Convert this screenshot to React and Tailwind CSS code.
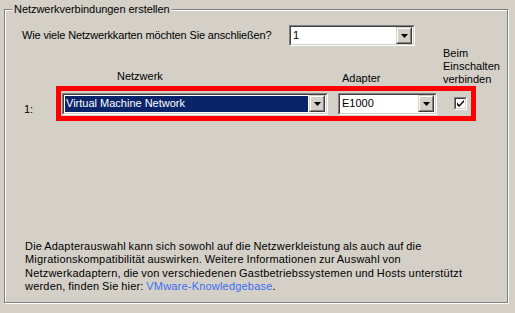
import React from 'react';

// --- Classic sunken dropdown (Win2000 look) ---
const DropButton = () => (
  <div className="w-[16px] h-[17px] border border-t-[#d4d0c8] border-l-[#d4d0c8] border-r-[#404040] border-b-[#404040] shrink-0">
    <div className="w-full h-full border border-t-white border-l-white border-r-[#808080] border-b-[#808080] bg-[#d4d0c8] flex items-center justify-center">
      <svg width="7" height="4" viewBox="0 0 7 4"><path d="M0 0h7L3.5 4z" fill="#000" /></svg>
    </div>
  </div>
);

const Combo = ({ value, width, height = 21, selected = false }) => (
  <div className="border border-t-[#808080] border-l-[#808080] border-r-white border-b-white shrink-0" style={{ width, height }}>
    <div className="h-full border border-t-[#404040] border-l-[#404040] border-r-[#d4d0c8] border-b-[#d4d0c8] bg-white flex items-center pr-[1px]">
      <div className="flex-1 h-full p-[1px] flex">
        <div className={`flex-1 flex items-center pl-[1px] ${selected ? 'bg-[#0a246a] text-white' : 'text-black'}`}>{value}</div>
      </div>
      <DropButton />
    </div>
  </div>
);

const CheckBox = () => (
  <div className="w-[13px] h-[13px] border border-t-[#808080] border-l-[#808080] border-r-white border-b-white shrink-0">
    <div className="w-full h-full border border-t-[#404040] border-l-[#404040] border-r-[#d4d0c8] border-b-[#d4d0c8] bg-white flex items-center justify-center">
      <svg width="7" height="7" viewBox="0 0 7 7"><path d="M0 2v3l2 2 5-5V-0L2 5z" fill="#000" /></svg>
    </div>
  </div>
);

export default function App() {
  return (
    <div className="w-[515px] h-[313px] bg-[#d4d0c8] pt-[9px] pl-[4px] text-[11px] leading-[13px] text-black overflow-hidden" style={{ fontFamily: '"Liberation Sans", Arial, sans-serif' }}>
      {/* Group box */}
      <div className="relative w-[504px] h-[294px] border border-[#808080] shadow-[inset_1px_1px_0_#fff,1px_1px_0_#fff]">
        <div className="absolute left-[7px] -top-[7px] px-[2px] bg-[#d4d0c8] tracking-[-0.05px]">Netzwerkverbindungen erstellen</div>

        <div className="flex items-center mt-[15px] pl-[17px] h-[21px]">
          <div className="w-[267px] tracking-[-0.15px]">Wie viele Netzwerkkarten möchten Sie anschließen?</div>
          <Combo value="1" width={126} />
        </div>

        <div className="flex items-end pl-[112px] mt-[1px] h-[39px]">
          <div className="w-[225px] mb-[3px]">Netzwerk</div>
          <div className="w-[101px] mb-[1px]">Adapter</div>
          <div>Beim<br />Einschalten<br />verbinden</div>
        </div>

        <div className="flex pl-[19px]">
          <div className="w-[32px] pt-[17px]">1:</div>
          <div className="w-[420px] h-[35px] border-[5px] border-[#ff0000] flex items-center pl-[1px]">
            <Combo value="Virtual Machine Network" width={266} height={22} selected />
            <div className="ml-[10px]"><Combo value="E1000" width={99} height={22} /></div>
            <div className="ml-[17px]"><CheckBox /></div>
          </div>
        </div>

        <p className="mt-[119px] pl-[20px] tracking-[0.2px] [word-spacing:-0.6px] leading-[13.3px]">
          Die Adapterauswahl kann sich sowohl auf die Netzwerkleistung als auch auf die<br />
          Migrationskompatibilität auswirken. Weitere Informationen zur Auswahl von<br />
          Netzwerkadaptern, die von verschiedenen Gastbetriebssystemen und Hosts unterstützt<br />
          werden, finden Sie hier: <span className="text-[#3a6ef5]">VMware-Knowledgebase</span>.
        </p>
      </div>
    </div>
  );
}
